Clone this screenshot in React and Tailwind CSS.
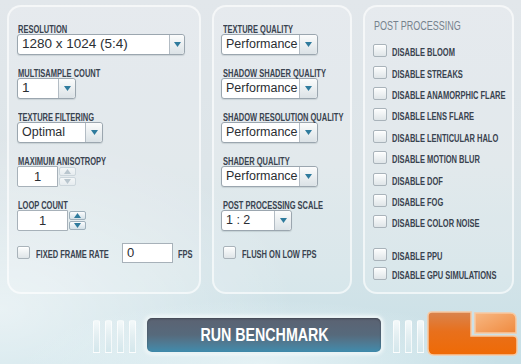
import React from 'react';

const sans = "font-['Liberation_Sans',Arial,sans-serif]";

// condensed look: Liberation Sans squeezed horizontally
const Label = ({ children, className = '' }) => (
  <div className={`h-[13px] leading-[13px] whitespace-nowrap ${className}`}>
    <span className={`inline-block origin-left scale-x-[0.75] ${sans} text-[10px] font-bold text-[#39434f]`}>
      {children}
    </span>
  </div>
);

const DownArrow = ({ color = '#2f7b9d' }) => (
  <svg width="7" height="5" viewBox="0 0 7 5">
    <path d="M0 0 H7 L3.5 5 Z" fill={color} />
  </svg>
);

const UpArrow = ({ color = '#2f7b9d' }) => (
  <svg width="7" height="5" viewBox="0 0 7 5">
    <path d="M0 5 H7 L3.5 0 Z" fill={color} />
  </svg>
);

const Select = ({ value, w, btn = 'w-[17px]', text = 'text-[12.5px]' }) => (
  <div className={`flex h-[21px] ${w} rounded-[3px] border border-[#9ba6af] bg-white shadow-[0_1px_1px_rgba(60,80,90,0.15)]`}>
    <div className={`flex-1 flex items-center pl-[4px] ${sans} ${text} text-[#2a2e33]`}>{value}</div>
    <div className={`${btn} flex items-center justify-center border-l border-[#b3bcc4] rounded-r-[3px] bg-linear-to-b from-[#fbfcfc] to-[#dbe2e6]`}>
      <DownArrow />
    </div>
  </div>
);

const Spinner = ({ value, w, disabled }) => {
  const c = disabled ? '#b9c6ce' : '#2f7b9d';
  const b = disabled ? 'border-[#ccd6dc] from-[#f4f7f8] to-[#e6ecef]' : 'border-[#9fb0bb] from-[#fbfcfd] to-[#d4e1e8]';
  return (
    <div className="flex h-[21px] items-stretch">
      <div className={`${w} flex items-center justify-center rounded-l-[2px] border border-[#a7b1b9] bg-white ${sans} text-[13px] text-[#2a2e33]`}>
        {value}
      </div>
      <div className="w-[18px] flex flex-col gap-[1px] py-[1px] pl-[1px]">
        <div className={`flex-1 flex items-center justify-center rounded-[2px] border ${b} bg-linear-to-b`}>
          <UpArrow color={c} />
        </div>
        <div className={`flex-1 flex items-center justify-center rounded-[2px] border ${b} bg-linear-to-b`}>
          <DownArrow color={c} />
        </div>
      </div>
    </div>
  );
};

const Check = ({ w = 'w-[13px]' }) => (
  <div className={`${w} h-[13px] shrink-0 rounded-[2px] border border-[#a9b3ba] bg-linear-to-b from-[#fdfefe] to-[#dfe5e8] shadow-[inset_0_1px_0_#fff]`} />
);

const Field = ({ label, children, indent = '' }) => (
  <div className="flex flex-col">
    <Label className={indent}>{label}</Label>
    {children}
  </div>
);

const postItems = [
  'DISABLE BLOOM',
  'DISABLE STREAKS',
  'DISABLE ANAMORPHIC FLARE',
  'DISABLE LENS FLARE',
  'DISABLE LENTICULAR HALO',
  'DISABLE MOTION BLUR',
  'DISABLE DOF',
  'DISABLE FOG',
  'DISABLE COLOR NOISE',
];

const Bars = ({ n }) => (
  <div className="flex items-end gap-[5px] h-[38px] pb-[1px]">
    {Array.from({ length: n }).map((_, i) => (
      <div
        key={i}
        className="w-[7px] h-[33px] rounded-t-[2px] bg-linear-to-b from-[#f4f9fa] via-[#e2eef1] to-[#d4e7ec] border border-white/70"
      />
    ))}
  </div>
);

const Logo = () => (
  <svg width="92" height="45" viewBox="0 0 92 45">
    <defs>
      <linearGradient id="lo" x1="0" y1="0" x2="0" y2="1">
        <stop offset="0" stopColor="#d9844f" />
        <stop offset="0.45" stopColor="#e8701c" />
        <stop offset="1" stopColor="#ef6a05" />
      </linearGradient>
      <linearGradient id="lo2" x1="0" y1="0" x2="1" y2="1">
        <stop offset="0" stopColor="#f7b884" />
        <stop offset="1" stopColor="#f08a3e" />
      </linearGradient>
    </defs>
    <path d="M5 1 H44 V25 H86 Q90 25 90 29 V40 Q90 44 86 44 H7 Q1 44 1 38 V5 Q1 1 5 1 Z" fill="url(#lo)" stroke="#f7c9a2" strokeWidth="1.5" />
    <path d="M48 2 H83 Q89 2 89 8 V22 H48 Z" fill="url(#lo2)" stroke="#f7c9a2" strokeWidth="1.5" />
  </svg>
);

export default function App() {
  return (
    <div className="w-[521px] h-[364px] overflow-hidden flex flex-col bg-[radial-gradient(ellipse_at_0%_85%,rgba(255,255,255,0.55),transparent_40%),linear-gradient(180deg,#e2e7eb_0%,#dde5e9_45%,#d3e3e8_75%,#c7e0e7_100%)]">
      <div className="flex pt-[5px] pl-[7px] gap-[11px] h-[294px]">
        {/* Panel 1 */}
        <div className="w-[194px] h-[289px] shrink-0 rounded-[14px] border-2 border-white/60 bg-white/15 pt-[14px] pl-[8px] flex flex-col gap-[10px]">
          <Field label="RESOLUTION" indent="pl-[1px]">
            <Select value="1280 x 1024 (5:4)" w="w-[168px]" btn="w-[15px]" text="text-[13.5px]" />
          </Field>
          <Field label="MULTISAMPLE COUNT" indent="pl-[1px]">
            <Select value="1" w="w-[59px]" text="text-[13.5px]" />
          </Field>
          <Field label="TEXTURE FILTERING" indent="pl-[1px]">
            <Select value="Optimal" w="w-[86px]" />
          </Field>
          <Field label="MAXIMUM ANISOTROPY" indent="pl-[1px]">
            <Spinner value="1" w="w-[41px]" disabled />
          </Field>
          <Field label="LOOP COUNT" indent="pl-[1px]">
            <Spinner value="1" w="w-[51px]" />
          </Field>
          <div className="flex items-center h-[21px] mt-[1px]">
            <Check />
            <Label className="ml-[6px] w-[86px]">FIXED FRAME RATE</Label>
            <div className={`w-[51px] h-[20px] flex items-center pl-[4px] border border-[#a7b1b9] bg-white ${sans} text-[13px] text-[#2a2e33]`}>
              0
            </div>
            <Label className="ml-[5px]">FPS</Label>
          </div>
        </div>

        {/* Panel 2 */}
        <div className="w-[140px] h-[289px] shrink-0 rounded-[14px] border-2 border-white/60 bg-white/15 pt-[14px] pl-[7px] flex flex-col gap-[10px]">
          <Field label="TEXTURE QUALITY" indent="pl-[2px]">
            <Select value="Performance" w="w-[97px]" btn="w-[18px]" />
          </Field>
          <Field label="SHADOW SHADER QUALITY" indent="pl-[2px]">
            <Select value="Performance" w="w-[97px]" btn="w-[18px]" />
          </Field>
          <Field label="SHADOW RESOLUTION QUALITY" indent="pl-[2px]">
            <Select value="Performance" w="w-[97px]" btn="w-[18px]" />
          </Field>
          <Field label="SHADER QUALITY" indent="pl-[2px]">
            <Select value="Performance" w="w-[97px]" btn="w-[18px]" />
          </Field>
          <Field label="POST PROCESSING SCALE" indent="pl-[2px]">
            <Select value="1 : 2" w="w-[71px]" />
          </Field>
          <div className="flex items-center h-[13px] mt-[5px] pl-[2px]">
            <Check />
            <Label className="ml-[6px]">FLUSH ON LOW FPS</Label>
          </div>
        </div>

        {/* Panel 3 */}
        <div className="w-[151px] h-[289px] shrink-0 rounded-[14px] border-2 border-white/60 bg-white/15 pt-[10px] pl-[8px] flex flex-col">
          <div className="h-[15px] leading-[15px] whitespace-nowrap pl-[1px]">
            <span className={`inline-block origin-left scale-x-[0.72] ${sans} text-[12.5px] text-[#76828d]`}>POST PROCESSING</span>
          </div>
          <div className="mt-[8px] flex flex-col">
            {postItems.map((t) => (
              <div key={t} className="h-[21.4px] flex items-center">
                <Check w="w-[14px]" />
                <Label className="ml-[5px]">{t}</Label>
              </div>
            ))}
          </div>
          <div className="mt-[12px] flex flex-col">
            {['DISABLE PPU', 'DISABLE GPU SIMULATIONS'].map((t) => (
              <div key={t} className="h-[19.5px] flex items-center">
                <Check w="w-[14px]" />
                <Label className="ml-[5px]">{t}</Label>
              </div>
            ))}
          </div>
        </div>
      </div>

      {/* Bottom bar */}
      <div className="flex-1 flex items-start pt-[22px] pl-[93px] bg-[radial-gradient(ellipse_at_50%_100%,rgba(236,246,248,0.8),transparent_65%)]">
        <Bars n={4} />
        <div className="ml-[9px] w-[238px] h-[38px] rounded-[7px] p-[2px] bg-[#e9f3f5] shadow-[0_0_4px_rgba(255,255,255,0.9)]">
          <div className="w-full h-full rounded-[5px] flex items-center justify-center bg-linear-to-b from-[#5b6272] via-[#566a7c] to-[#3f8cad] shadow-[inset_0_1px_2px_rgba(0,0,0,0.3)]">
            <span className={`inline-block scale-x-[0.75] ${sans} font-bold text-[19px] text-white`}>RUN BENCHMARK</span>
          </div>
        </div>
        <div className="ml-[10px]">
          <Bars n={3} />
        </div>
        <div className="ml-[3px] -mt-[5px]">
          <Logo />
        </div>
      </div>
    </div>
  );
}
